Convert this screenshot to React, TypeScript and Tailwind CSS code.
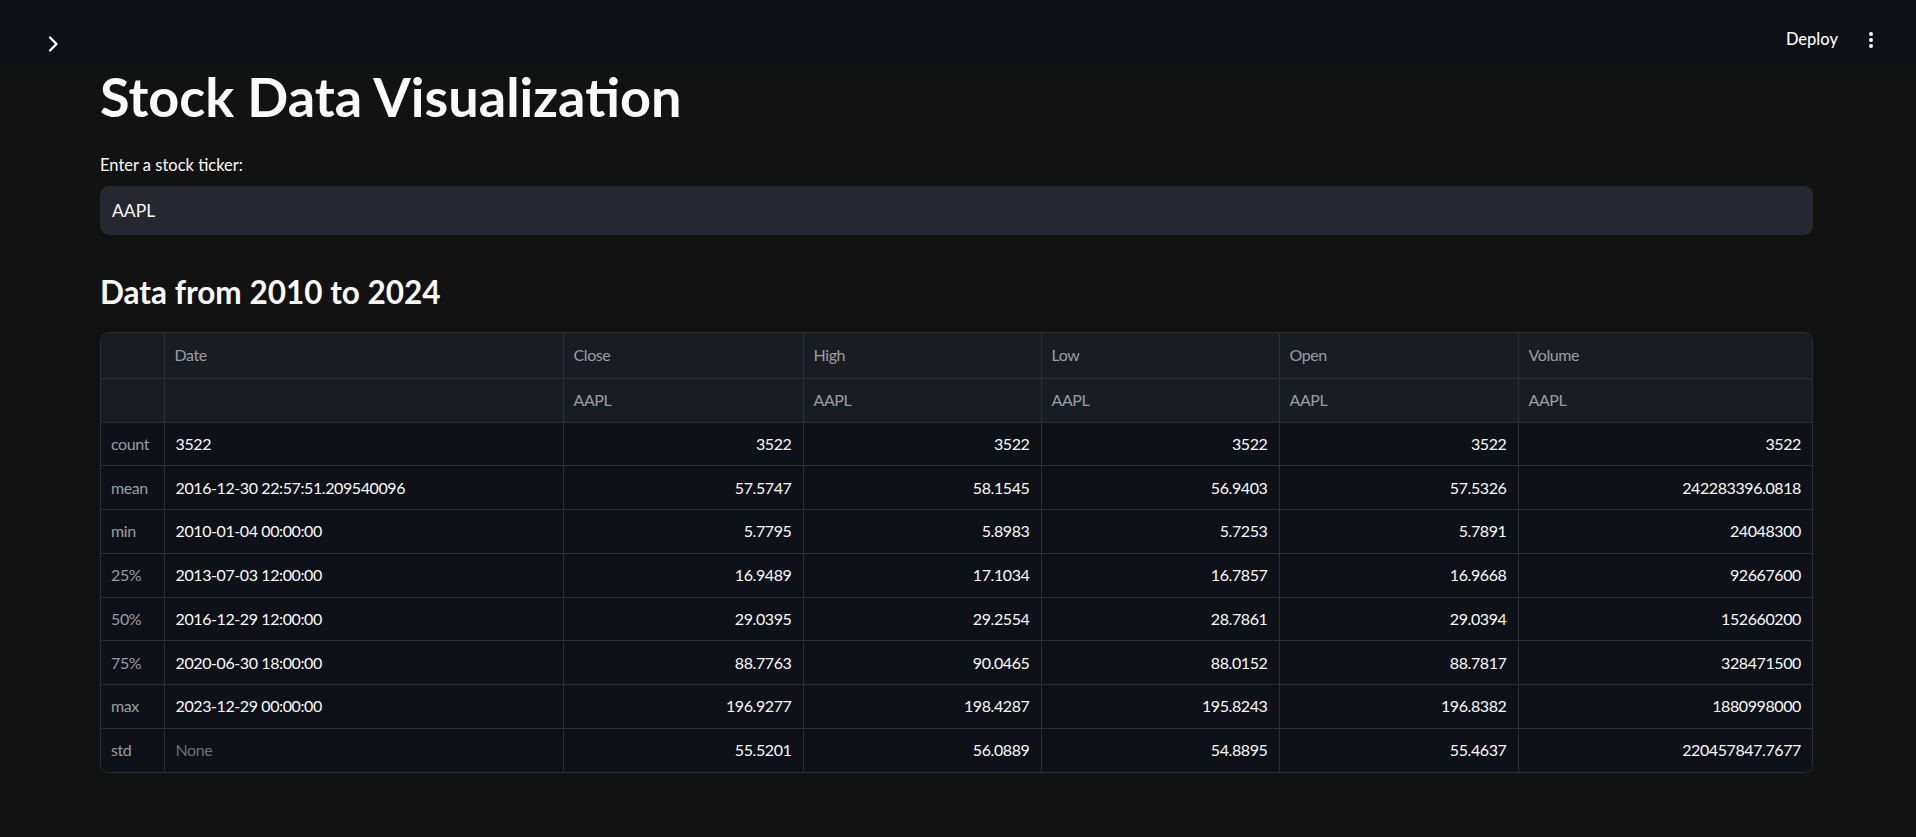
import { useState } from "react";

const columns = [
  { key: "Date", w: "w-[399px]", align: "left" },
  { key: "Close", w: "w-[240px]", align: "right" },
  { key: "High", w: "w-[238px]", align: "right" },
  { key: "Low", w: "w-[238px]", align: "right" },
  { key: "Open", w: "w-[239px]", align: "right" },
  { key: "Volume", w: "", align: "right" },
];

const rows: { label: string; values: string[] }[] = [
  { label: "count", values: ["3522", "3522", "3522", "3522", "3522", "3522"] },
  { label: "mean", values: ["2016-12-30 22:57:51.209540096", "57.5747", "58.1545", "56.9403", "57.5326", "242283396.0818"] },
  { label: "min", values: ["2010-01-04 00:00:00", "5.7795", "5.8983", "5.7253", "5.7891", "24048300"] },
  { label: "25%", values: ["2013-07-03 12:00:00", "16.9489", "17.1034", "16.7857", "16.9668", "92667600"] },
  { label: "50%", values: ["2016-12-29 12:00:00", "29.0395", "29.2554", "28.7861", "29.0394", "152660200"] },
  { label: "75%", values: ["2020-06-30 18:00:00", "88.7763", "90.0465", "88.0152", "88.7817", "328471500"] },
  { label: "max", values: ["2023-12-29 00:00:00", "196.9277", "198.4287", "195.8243", "196.8382", "1880998000"] },
  { label: "std", values: ["None", "55.5201", "56.0889", "54.8895", "55.4637", "220457847.7677"] },
];

function Header() {
  return (
    <header className="h-[67px] bg-[#0e1117] flex items-start justify-between pl-[47px] pr-[42px]">
      <svg width="12" height="18" viewBox="0 0 12 18" fill="none" className="mt-[35px]">
        <path d="M3 2.5 9.5 9 3 15.5" stroke="#fafafa" strokeWidth="2.4" strokeLinecap="round" strokeLinejoin="round" />
      </svg>
      <div className="flex items-center gap-[30px] mt-[27px]">
        <span className="text-[16.5px] text-[#fafafa] font-medium">Deploy</span>
        <svg width="6" height="18" viewBox="0 0 6 18" fill="#fafafa" className="mt-[2px]">
          <circle cx="3" cy="3" r="2" />
          <circle cx="3" cy="9" r="2" />
          <circle cx="3" cy="15" r="2" />
        </svg>
      </div>
    </header>
  );
}

function StatsTable() {
  return (
    <div className="mt-[23px] rounded-[9px] border border-[#2c2e37] overflow-hidden">
      <table className="w-full table-fixed border-collapse text-[16px] tracking-[-0.4px]">
        <colgroup>
          <col className="w-[63px]" />
          {columns.map((c) => (
            <col key={c.key} className={c.w} />
          ))}
        </colgroup>
        <thead className="bg-[#1a1c24] text-[#9a9ca3]">
          <tr className="h-[45px]">
            <th className="font-normal" />
            {columns.map((c) => (
              <th key={c.key} className="border-l border-[#2c2e37] text-left font-normal px-[10px]">
                {c.key}
              </th>
            ))}
          </tr>
          <tr className="h-[44px] border-t border-[#2c2e37]">
            <th className="font-normal" />
            {columns.map((c) => (
              <th key={c.key} className="border-l border-[#2c2e37] text-left font-normal px-[10px]">
                {c.key === "Date" ? "" : "AAPL"}
              </th>
            ))}
          </tr>
        </thead>
        <tbody className="bg-[#0e1117]">
          {rows.map((r) => (
            <tr key={r.label} className="h-[43.75px] border-t border-[#2c2e37]">
              <td className="text-[#9a9ca3] px-[10px]">{r.label}</td>
              {r.values.map((v, i) => (
                <td
                  key={i}
                  className={`border-l border-[#2c2e37] px-[11px] ${
                    columns[i].align === "right" ? "text-right" : "text-left"
                  } ${v === "None" ? "text-[#6c6e75]" : "text-[#fafafa]"}`}
                >
                  {v}
                </td>
              ))}
            </tr>
          ))}
        </tbody>
      </table>
    </div>
  );
}

export default function App() {
  const [ticker, setTicker] = useState("AAPL");

  return (
    <div
      className="min-h-[837px] bg-[#121212] text-[#fafafa]"
      style={{ fontFamily: "Lato, 'Noto Sans', sans-serif" }}
    >
      <Header />
      <main className="pl-[100px] pr-[103px] pb-[60px]">
        <h1 className="mt-[3px] text-[54px] leading-[54px] font-bold">Stock Data Visualization</h1>

        <label className="block mt-[33px] text-[16.5px] leading-[17px]">Enter a stock ticker:</label>
        <input
          value={ticker}
          onChange={(e) => setTicker(e.target.value)}
          className="mt-[12px] w-full h-[49px] rounded-[9px] bg-[#262730] px-[12px] text-[17.5px] text-[#fafafa] outline-none"
        />

        <h3 className="mt-[41px] text-[31.5px] leading-[33px] font-bold">Data from 2010 to 2024</h3>

        <StatsTable />
      </main>
    </div>
  );
}
